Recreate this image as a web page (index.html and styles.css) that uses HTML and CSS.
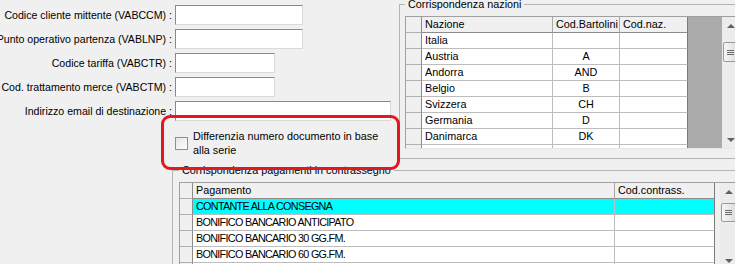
FILE: index.html
```html
<!DOCTYPE html>
<html lang="it">
<head>
    <meta charset="UTF-8">
    <meta name="viewport" content="width=device-width, initial-scale=1.0">
    <title>Parametri Bartolini</title>
    <link rel="stylesheet" href="styles.css">
</head>
<body>
    <div class="top">
        <div class="fields">
            <label class="lbl">Codice cliente mittente (VABCCM) :</label>
            <input type="text" class="edit w128">
            <label class="lbl">Punto operativo partenza (VABLNP) :</label>
            <input type="text" class="edit w128">
            <label class="lbl">Codice tariffa (VABCTR) :</label>
            <input type="text" class="edit w100">
            <label class="lbl">Cod. trattamento merce (VABCTM) :</label>
            <input type="text" class="edit w100">
            <label class="lbl">Indirizzo email di destinazione :</label>
            <input type="text" class="edit w216">

            <div class="check-row">
                <span class="checkbox"></span>
                <span class="check-text">Differenzia numero documento in base<br>alla serie</span>
            </div>
        </div>

        <fieldset class="group nations">
            <legend>Corrispondenza nazioni</legend>
            <div class="grid">
                <div class="grid-area">
                    <table class="nations-table">
                        <colgroup>
                            <col class="c-ind16">
                            <col class="c-nazione">
                            <col class="c-bart">
                            <col class="c-naz">
                        </colgroup>
                        <tr><th class="ind"></th><th>Nazione</th><th>Cod.Bartolini</th><th class="last">Cod.naz.</th></tr>
                        <tr><td class="ind"></td><td>Italia</td><td class="center"></td><td class="last"></td></tr>
                        <tr><td class="ind"></td><td>Austria</td><td class="center">A</td><td class="last"></td></tr>
                        <tr><td class="ind"></td><td>Andorra</td><td class="center">AND</td><td class="last"></td></tr>
                        <tr><td class="ind"></td><td>Belgio</td><td class="center">B</td><td class="last"></td></tr>
                        <tr><td class="ind"></td><td>Svizzera</td><td class="center">CH</td><td class="last"></td></tr>
                        <tr><td class="ind"></td><td>Germania</td><td class="center">D</td><td class="last"></td></tr>
                        <tr><td class="ind"></td><td>Danimarca</td><td class="center">DK</td><td class="last"></td></tr>
                        <tr><td class="ind"></td><td></td><td class="center"></td><td class="last"></td></tr>
                    </table>
                </div>
                <div class="vscroll">
                    <span class="arrow up"></span>
                    <span class="thumb"></span>
                    <span class="scroll-fill"></span>
                    <span class="arrow down"></span>
                </div>
            </div>
        </fieldset>
    </div>

    <fieldset class="group payments">
        <legend>Corrispondenza pagamenti in contrassegno</legend>
        <div class="grid">
            <div class="grid-area">
                <table class="payments-table">
                    <colgroup>
                        <col class="c-ind13">
                        <col class="c-pag">
                        <col class="c-contr">
                    </colgroup>
                    <tr><th class="ind"></th><th>Pagamento</th><th class="last">Cod.contrass.</th></tr>
                    <tr class="selected"><td class="ind"></td><td class="caps">CONTANTE ALLA CONSEGNA</td><td class="last"></td></tr>
                    <tr><td class="ind"></td><td class="caps">BONIFICO BANCARIO ANTICIPATO</td><td class="last"></td></tr>
                    <tr><td class="ind"></td><td class="caps">BONIFICO BANCARIO 30 GG.FM.</td><td class="last"></td></tr>
                    <tr><td class="ind"></td><td class="caps">BONIFICO BANCARIO 60 GG.FM.</td><td class="last"></td></tr>
                    <tr><td class="ind"></td><td class="caps"></td><td class="last"></td></tr>
                </table>
            </div>
            <div class="vscroll">
                <span class="arrow up"></span>
                <span class="thumb"></span>
                <span class="scroll-fill"></span>
                <span class="arrow down"></span>
            </div>
        </div>
    </fieldset>

    <!-- red highlight drawn over the form -->
    <div class="annotation"></div>
</body>
</html>
```

FILE: styles.css
```css
html {
    overflow: hidden;
}
body {
    margin: 0;
    width: 735px;
    height: 264px;
    overflow: hidden;
    position: relative;
    background-color: #f0f0f0;
    font-family: "Liberation Sans", Arial, sans-serif;
    font-size: 10.8px;
    color: #000;
}

/* upper part: edit fields + nations grid */
.top {
    display: flex;
}
.fields {
    width: 399px;
    flex: none;
    box-sizing: border-box;
    padding-top: 5px;
    display: grid;
    grid-template-columns: 172px max-content;
    grid-template-rows: repeat(5, 20px) auto;
    column-gap: 3px;
    row-gap: 4px;
    align-content: start;
}
.lbl {
    display: flex;
    justify-content: flex-end;
    align-items: center;
    white-space: nowrap;
    font-size: 10.6px;
}
.edit {
    box-sizing: border-box;
    height: 20px;
    margin: 0;
    padding: 0 2px;
    border: 1px solid;
    border-color: #8a8a8a #dadada #dadada #8a8a8a;
    background-color: #fff;
    font: inherit;
    justify-self: start;
}
.w128 { width: 128px; }
.w100 { width: 100px; }
.w216 { width: 216px; }

.check-row {
    grid-column: 2;
    margin-top: 4px;
    height: 28px;
    display: flex;
    align-items: center;
    gap: 5px;
}
.checkbox {
    width: 13px;
    height: 13px;
    flex: none;
    box-sizing: border-box;
    border: 1px solid #8f8f8f;
    background: linear-gradient(135deg, #e6e6e6, #fff);
}
.check-text {
    line-height: 14px;
    white-space: nowrap;
}

/* group boxes */
.group {
    margin: 0;
    min-width: 0;
    box-sizing: border-box;
    border: 1px solid #b4b4b4;
    padding: 6px 6px 9px 5px;
}
.group legend {
    padding: 0 3px;
    line-height: 12px;
}
.nations {
    margin-top: -2px;
    width: 347px;
    flex: none;
}
.payments {
    margin: 5px 0 0 172px;
    width: 572px;
    padding-left: 6px;
}

/* data grids */
.grid {
    display: flex;
    box-sizing: border-box;
    border-top: 1px solid #a0a0a0;
    border-left: 1px solid #a0a0a0;
    overflow: hidden;
}
.nations .grid {
    height: 133px;
    border-bottom: 1px solid #e6e6e6;
}
.payments .grid {
    height: 87px;
}
.grid-area {
    flex: 1;
    overflow: hidden;
    background-color: #ababab;
}
.payments .grid-area {
    background-color: #f0f0f0;
}
table {
    border-collapse: separate;
    border-spacing: 0;
    table-layout: fixed;
}
.nations-table { width: 282px; }
.payments-table { width: 535px; }
.c-ind16 { width: 16px; }
.c-nazione { width: 131px; }
.c-bart { width: 67px; }
.c-naz { width: 68px; }
.c-ind13 { width: 13px; }
.c-pag { width: 422px; }
.c-contr { width: 100px; }

th, td {
    height: 16px;
    box-sizing: border-box;
    padding: 0 3px;
    border-right: 1px solid #bdbdbd;
    border-bottom: 1px solid #bdbdbd;
    background-color: #fff;
    font-weight: normal;
    text-align: left;
    line-height: 15px;
    white-space: nowrap;
    overflow: hidden;
}
th {
    background-color: #f0f0f0;
    border-right-color: #a8a8a8;
    border-bottom-color: #8c8c8c;
}
.ind {
    padding: 0;
    background-color: #f0f0f0;
    border-right-color: #8c8c8c;
    border-bottom-color: #b0b0b0;
}
.last {
    border-right-color: #7a7a7a;
}
.center {
    text-align: center;
}
.caps {
    letter-spacing: -0.7px;
}
tr.selected td {
    background-color: #00ffff;
}
tr.selected td.ind {
    background-color: #f0f0f0;
}

/* vertical scrollbar */
.vscroll {
    width: 17px;
    flex: none;
    display: flex;
    flex-direction: column;
    align-items: center;
    background-color: #ececec;
}
.arrow {
    width: 17px;
    height: 17px;
    flex: none;
    display: flex;
    align-items: center;
    justify-content: center;
}
.arrow::before {
    content: "";
    border-left: 4px solid transparent;
    border-right: 4px solid transparent;
}
.arrow.up::before {
    border-bottom: 4px solid #606060;
}
.arrow.down::before {
    border-top: 4px solid #606060;
}
.thumb {
    width: 15px;
    height: 20px;
    margin-top: 8px;
    box-sizing: border-box;
    border: 1px solid #9a9a9a;
    border-radius: 2px;
    background: linear-gradient(to right, #f6f6f6, #dedede);
    display: flex;
    align-items: center;
    justify-content: center;
}
.payments .thumb {
    margin-top: 3px;
    height: 19px;
}
.thumb::before {
    content: "";
    width: 7px;
    height: 5px;
    background: repeating-linear-gradient(to bottom, #6a6a6a 0 1px, transparent 1px 2px);
}
.scroll-fill {
    flex: 1;
}

.annotation {
    position: absolute;
    left: 161px;
    top: 115px;
    width: 239px;
    height: 55px;
    box-sizing: border-box;
    border: 3px solid #e4161e;
    border-radius: 9px;
}
```
